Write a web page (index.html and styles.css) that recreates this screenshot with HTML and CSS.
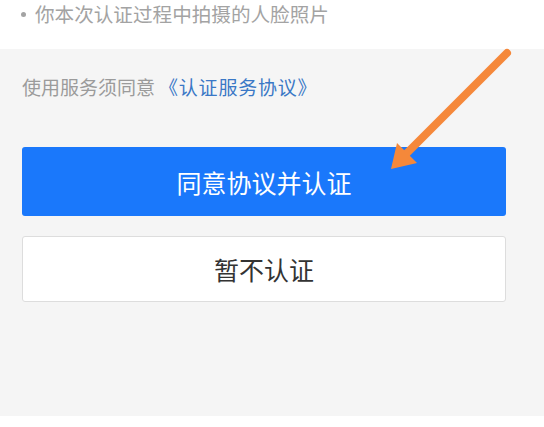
FILE: index.html
```html
<!DOCTYPE html>
<html lang="zh-CN">
<head>
    <meta charset="UTF-8">
    <meta name="viewport" content="width=device-width, initial-scale=1.0">
    <title>认证</title>
    <link rel="stylesheet" href="styles.css">
</head>
<body>
    <section class="info">
        <ul class="info-list">
            <li>你本次认证过程中拍摄的人脸照片</li>
        </ul>
    </section>
    <main class="panel">
        <p class="agree">使用服务须同意<a href="#">《认证服务协议》</a></p>
        <button class="btn btn-primary">同意协议并认证</button>
        <button class="btn btn-plain">暂不认证</button>
    </main>
    <div class="bottom"></div>
    <svg class="pointer" width="544" height="427" viewBox="0 0 544 427">
        <line x1="507" y1="53" x2="404" y2="156" stroke="#f5883a" stroke-width="8" stroke-linecap="round"/>
        <polygon points="391,169 397,143 417,163" fill="#f5883a"/>
    </svg>
</body>
</html>
```

FILE: styles.css
```css
* {
    margin: 0;
    padding: 0;
    box-sizing: border-box;
}
body {
    font-family: "Noto Sans CJK SC", "Noto Sans", sans-serif;
    background-color: #ffffff;
    width: 544px;
    height: 427px;
    overflow: hidden;
    position: relative;
}
.info {
    height: 49px;
    background-color: #ffffff;
    overflow: hidden;
}
.info-list {
    list-style: none;
    padding-left: 21px;
}
.info-list li {
    font-size: 19.6px;
    line-height: 28px;
    color: #a3a3a3;
    display: flex;
    align-items: center;
    gap: 9px;
}
.info-list li::before {
    content: "";
    width: 5px;
    height: 5px;
    border-radius: 50%;
    background-color: #a3a3a3;
}
.panel {
    height: 367px;
    background-color: #f5f5f5;
    padding: 26px 38px 0 22px;
    display: flex;
    flex-direction: column;
}
.agree {
    font-size: 19px;
    line-height: 24px;
    color: #9b9b9b;
}
.agree a {
    color: #3a78c6;
    text-decoration: none;
    margin-left: 4px;
    letter-spacing: 0.8px;
}
.btn {
    font-family: inherit;
    font-size: 25px;
    width: 100%;
    border-radius: 3px;
    cursor: pointer;
}
.btn-primary {
    margin-top: 48px;
    height: 69px;
    background-color: #1a78fb;
    color: #ffffff;
    border: none;
}
.btn-plain {
    margin-top: 20px;
    height: 66px;
    background-color: #ffffff;
    color: #333333;
    border: 1px solid #dddddd;
}
.bottom {
    height: 11px;
    background-color: #ffffff;
}
.pointer {
    position: absolute;
    top: 0;
    left: 0;
    pointer-events: none;
}
```
